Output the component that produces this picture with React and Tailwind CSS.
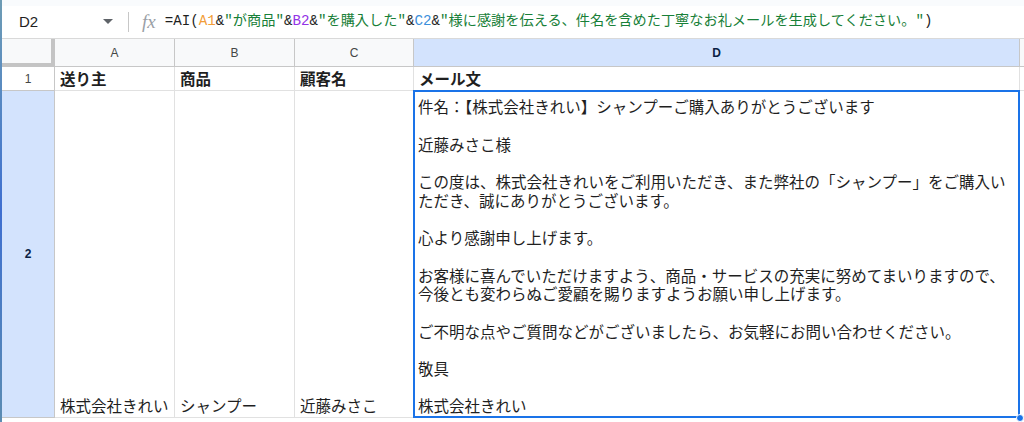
import React from "react";

const jp = { fontFamily: '"Liberation Sans", "Noto Sans CJK JP", sans-serif' };
const mono = { fontFamily: '"Liberation Mono", "Noto Sans CJK JP", monospace' };

const mailLines = [
  "件名：【株式会社きれい】シャンプーご購入ありがとうございます",
  "",
  "近藤みさこ様",
  "",
  "この度は、株式会社きれいをご利用いただき、また弊社の「シャンプー」をご購入い",
  "ただき、誠にありがとうございます。",
  "",
  "心より感謝申し上げます。",
  "",
  "お客様に喜んでいただけますよう、商品・サービスの充実に努めてまいりますので、",
  "今後とも変わらぬご愛顧を賜りますようお願い申し上げます。",
  "",
  "ご不明な点やご質問などがございましたら、お気軽にお問い合わせください。",
  "",
  "敬具",
  "",
  "株式会社きれい",
];

function ColHead({ children, selected }) {
  return (
    <div
      className={
        "flex items-center justify-center border-b border-r border-[#c7c7c7] text-[12px] " +
        (selected ? "bg-[#d3e3fd] font-bold text-[#0b1f44]" : "bg-[#f8f9fa] text-[#444746]")
      }
      style={jp}
    >
      {children}
    </div>
  );
}

function Cell({ children, bold }) {
  return (
    <div
      className={
        "flex flex-col justify-end border-b border-r border-[#e1e1e1] bg-white px-[5px] pb-[1px] text-[15.5px] leading-[19px] text-[#1f1f1f] whitespace-nowrap overflow-hidden " +
        (bold ? "font-bold" : "")
      }
      style={jp}
    >
      {children}
    </div>
  );
}

export default function App() {
  return (
    <div className="flex h-[422px] w-[1024px] overflow-hidden bg-white">
      <div className="w-[2px] shrink-0 bg-linear-to-b from-[#6e9cb4] via-[#3f6fd0] to-[#5c8cb2]" />
      <div className="flex min-w-0 flex-1 flex-col">
        <div className="h-[6px] bg-[#f9fbfd]" />
        <div className="flex h-[33px] items-center border-b border-[#d9d9d9] bg-white">
          <div className="w-[100px] pl-[17px] text-[15px] text-[#1f1f1f]" style={{ fontFamily: '"Liberation Sans", sans-serif' }}>
            D2
          </div>
          <svg width="10" height="6" viewBox="0 0 10 6" className="ml-[1px]">
            <path d="M0 0 L10 0 L5 5 Z" fill="#5f6368" />
          </svg>
          <div className="ml-[15px] h-[20px] w-[1px] bg-[#c7c7c7]" />
          <div
            className="ml-[13px] text-[19px] italic text-[#9aa0a6]"
            style={{ fontFamily: '"Liberation Serif", serif' }}
          >
            fx
          </div>
          <div className="ml-[9px] whitespace-nowrap text-[14.2px] text-[#1f1f1f]" style={mono}>
            =AI(<span className="text-[#f29d38]">A1</span>&amp;
            <span className="text-[#188038]">"が商品"</span>&amp;
            <span className="text-[#9334e6]">B2</span>&amp;
            <span className="text-[#188038]">"を購入した"</span>&amp;
            <span className="text-[#3b8fdb]">C2</span>&amp;
            <span className="text-[#188038]">"様に感謝を伝える、件名を含めた丁寧なお礼メールを生成してください。"</span>)
          </div>
        </div>
        <div className="grid grid-cols-[53px_120px_120px_119px_606px_1fr] grid-rows-[28px_24px_327px_1fr]">
          {/* header row */}
          <div className="border-b-[4px] border-r-[4px] border-[#c4c4c4] bg-[#f8f9fa]" />
          <ColHead>A</ColHead>
          <ColHead>B</ColHead>
          <ColHead>C</ColHead>
          <ColHead selected>D</ColHead>
          <div className="border-b border-[#c7c7c7] bg-[#f8f9fa]" />

          {/* row 1 */}
          <div
            className="flex items-center justify-center border-b border-r border-[#c7c7c7] bg-white text-[12px] text-[#444746]"
            style={jp}
          >
            1
          </div>
          <Cell bold>送り主</Cell>
          <Cell bold>商品</Cell>
          <Cell bold>顧客名</Cell>
          <Cell bold>メール文</Cell>
          <div className="border-b border-[#e1e1e1]" />

          {/* row 2 */}
          <div
            className="flex items-center justify-center border-b border-r border-[#c7c7c7] bg-[#d3e3fd] text-[12px] font-bold text-[#0b1f44]"
            style={jp}
          >
            2
          </div>
          <Cell>株式会社きれい</Cell>
          <Cell>シャンプー</Cell>
          <Cell>近藤みさこ</Cell>
          <div className="relative border-b border-r border-[#e1e1e1] bg-white">
            <div
              className="flex h-full flex-col justify-end overflow-hidden px-[4px] text-[15.5px] text-[#1f1f1f]"
              style={jp}
            >
              {mailLines.map((l, i) => (
                <div key={i} className="h-[18.7px] whitespace-nowrap leading-[18.7px]">
                  {l}
                </div>
              ))}
            </div>
            <div className="pointer-events-none absolute -left-[1px] -top-[1px] -right-[1px] -bottom-[1px] border-2 border-[#1a73e8]" />
            <div className="absolute -bottom-[5px] -right-[5px] h-[8px] w-[8px] rounded-full border border-white bg-[#1a73e8]" />
          </div>
          <div className="border-b border-[#e1e1e1]" />

          {/* filler row */}
          <div className="border-r border-[#c7c7c7] bg-[#f8f9fa]" />
          <div className="border-r border-[#e1e1e1]" />
          <div className="border-r border-[#e1e1e1]" />
          <div className="border-r border-[#e1e1e1]" />
          <div className="border-r border-[#e1e1e1]" />
          <div />
        </div>
      </div>
    </div>
  );
}
